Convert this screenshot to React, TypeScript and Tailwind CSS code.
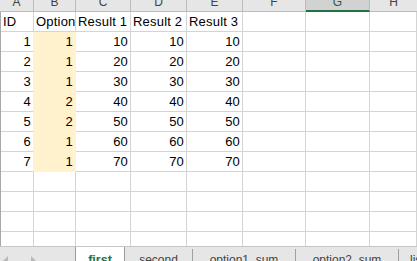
const COLS = [
  { key: "A", w: "w-[33px]", hw: "w-[34px]" },
  { key: "B", w: "w-[42px]", hw: "w-[42px]" },
  { key: "C", w: "w-[55px]", hw: "w-[55px]" },
  { key: "D", w: "w-[56px]", hw: "w-[56px]" },
  { key: "E", w: "w-[56px]", hw: "w-[56px]" },
  { key: "F", w: "w-[63px]", hw: "w-[63px]" },
  { key: "G", w: "w-[64px]", hw: "w-[64px]" },
  { key: "H", w: "flex-1", hw: "flex-1" },
];

const header = ["ID", "Option", "Result 1", "Result 2", "Result 3"];
const data = [
  [1, 1, 10, 10, 10],
  [2, 1, 20, 20, 20],
  [3, 1, 30, 30, 30],
  [4, 2, 40, 40, 40],
  [5, 2, 50, 50, 50],
  [6, 1, 60, 60, 60],
  [7, 1, 70, 70, 70],
];

function HeaderRow() {
  return (
    <div className="flex h-[12px] shrink-0 bg-[#e6e6e6] text-[12px] text-[#444]">
      {COLS.map((c, i) => {
        const sel = c.key === "G";
        return (
          <div
            key={c.key}
            className={`${c.hw} h-[12px] overflow-hidden flex justify-center ${
              i < COLS.length - 1 ? "border-r border-r-[#bcbcbc]" : ""
            } ${sel ? "bg-[#d2d2d2] border-b-2 border-b-[#217346] text-[#2f5c45]" : "border-b border-b-[#bcbcbc]"}`}
          >
            <span className="block leading-[12px] -mt-[4px]">{c.key}</span>
          </div>
        );
      })}
    </div>
  );
}

function Row({ cells, cream }: { cells: (string | number)[]; cream: boolean }) {
  return (
    <div className="flex h-[20px] shrink-0">
      {COLS.map((c, i) => {
        const v = cells[i];
        const isB = i === 1 && cream;
        const beforeB = i === 0 && cream;
        return (
          <div
            key={c.key}
            className={`${c.w} h-[20px] overflow-hidden whitespace-nowrap border-b border-r leading-[19px] ${
              isB ? "bg-[#fff2cc] border-r-[#fff2cc] border-b-[#fff2cc]" : "border-b-[#d4d4d4] border-r-[#d4d4d4]"
            } ${beforeB ? "border-r-[#fff2cc]" : ""} ${
              typeof v === "number" ? "text-right pr-[2px]" : "pl-[2px]"
            }`}
          >
            {v}
          </div>
        );
      })}
    </div>
  );
}

function Grid() {
  const rows: { cells: (string | number)[]; cream: boolean }[] = [
    { cells: header, cream: false },
    ...data.map((d) => ({ cells: d, cream: true })),
  ];
  for (let i = 0; i < 4; i++) rows.push({ cells: [], cream: false });
  return (
    <div className="h-[234px] shrink-0 overflow-hidden border-l border-l-[#a8a8a8] text-[13px] tracking-[0.2px] text-black">
      {rows.map((r, i) => (
        <Row key={i} cells={r.cells} cream={r.cream} />
      ))}
    </div>
  );
}

function Sep() {
  return <div className="w-px mt-[2px] h-[20px] bg-[#a0a0a0] shrink-0" />;
}

function Tabs() {
  return (
    <div className="flex h-[15px] shrink-0 border-t border-t-[#c6c6c6] bg-[#e6e6e6] text-[12px] text-[#444] font-['Liberation_Sans',sans-serif] overflow-hidden">
      <div className="w-[75px] shrink-0 relative">
        <svg className="absolute left-[3px] top-[9px]" width="6" height="10" viewBox="0 0 6 10">
          <polygon points="5,0 0,5 5,10" fill="#b8b8b8" />
        </svg>
        <svg className="absolute left-[31px] top-[9px]" width="6" height="10" viewBox="0 0 6 10">
          <polygon points="0,0 5,5 0,10" fill="#b8b8b8" />
        </svg>
      </div>
      <div className="w-[50px] shrink-0 -mt-px h-[24px] bg-white border-l border-r border-[#9b9b9b] flex justify-center pt-[6px] leading-[16px] font-bold text-[#217346] text-[12.5px]">
        first
      </div>
      <div className="w-[67px] shrink-0 flex justify-center pt-[5px] leading-[16px]">second</div>
      <Sep />
      <div className="w-[102px] shrink-0 flex justify-center pt-[5px] leading-[16px]">option1_sum</div>
      <Sep />
      <div className="w-[102px] shrink-0 flex justify-center pt-[5px] leading-[16px]">option2_sum</div>
      <Sep />
      <div className="flex-1 pl-[11px] pt-[5px] leading-[16px] whitespace-nowrap">list</div>
    </div>
  );
}

export default function App() {
  return (
    <div className="w-[417px] h-[261px] overflow-hidden bg-white flex flex-col font-['Liberation_Sans',sans-serif]">
      <HeaderRow />
      <Grid />
      <Tabs />
    </div>
  );
}
